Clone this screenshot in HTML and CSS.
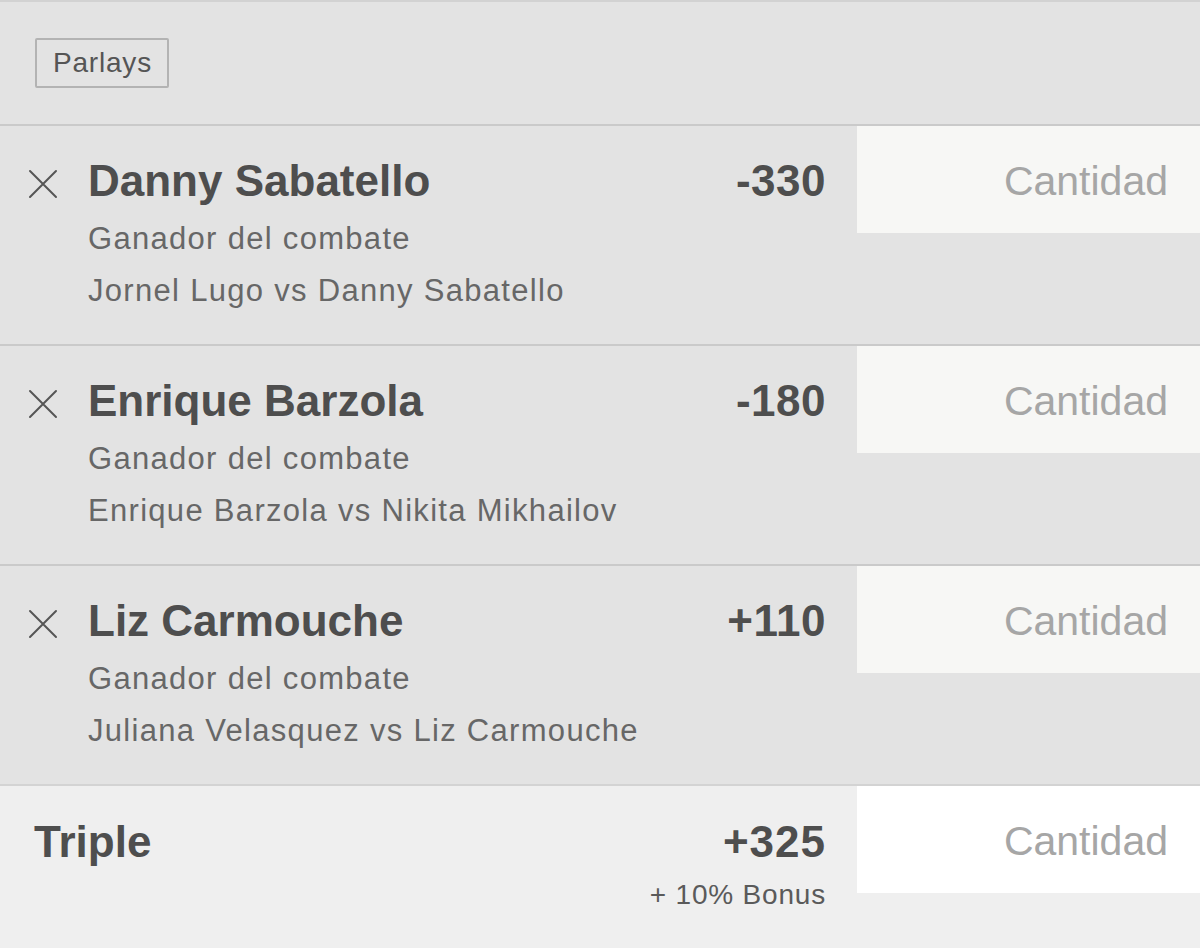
FILE: index.html
```html
<!DOCTYPE html>
<html lang="es">
<head>
  <meta charset="UTF-8">
  <meta name="viewport" content="width=device-width, initial-scale=1.0">
  <title>Parlays</title>
  <link rel="stylesheet" href="styles.css">
</head>
<body>
  <div class="slip">
    <div class="slip-header">
      <span class="tag">Parlays</span>
    </div>

    <div class="leg">
      <div class="remove">
        <svg viewBox="0 0 30 30" width="30" height="30"><path d="M2 2 L28 28 M28 2 L2 28" stroke="#555" stroke-width="2" fill="none" stroke-linecap="round"/></svg>
      </div>
      <div class="info">
        <div class="name">Danny Sabatello</div>
        <div class="market market-first">Ganador del combate</div>
        <div class="market">Jornel Lugo vs Danny Sabatello</div>
      </div>
      <div class="odds">-330</div>
      <div class="stake">Cantidad</div>
    </div>

    <div class="leg">
      <div class="remove">
        <svg viewBox="0 0 30 30" width="30" height="30"><path d="M2 2 L28 28 M28 2 L2 28" stroke="#555" stroke-width="2" fill="none" stroke-linecap="round"/></svg>
      </div>
      <div class="info">
        <div class="name">Enrique Barzola</div>
        <div class="market market-first">Ganador del combate</div>
        <div class="market">Enrique Barzola vs Nikita Mikhailov</div>
      </div>
      <div class="odds">-180</div>
      <div class="stake">Cantidad</div>
    </div>

    <div class="leg">
      <div class="remove">
        <svg viewBox="0 0 30 30" width="30" height="30"><path d="M2 2 L28 28 M28 2 L2 28" stroke="#555" stroke-width="2" fill="none" stroke-linecap="round"/></svg>
      </div>
      <div class="info">
        <div class="name">Liz Carmouche</div>
        <div class="market market-first">Ganador del combate</div>
        <div class="market">Juliana Velasquez vs Liz Carmouche</div>
      </div>
      <div class="odds">+110</div>
      <div class="stake">Cantidad</div>
    </div>

    <div class="total">
      <div class="total-label">Triple</div>
      <div class="total-odds">
        <div class="odds-value">+325</div>
        <div class="bonus">+ 10% Bonus</div>
      </div>
      <div class="stake stake-white">Cantidad</div>
    </div>
  </div>
</body>
</html>
```

FILE: styles.css
```css
body {
  margin: 0;
  font-family: "Liberation Sans", Arial, sans-serif;
  background-color: #e3e3e3;
  color: #555;
}
.slip {
  width: 1200px;
  height: 948px;
  overflow: hidden;
  border-top: 2px solid #d2d2d2;
  box-sizing: border-box;
}
.slip-header {
  height: 122px;
  padding: 36px 0 0 35px;
  box-sizing: border-box;
  background-color: #e3e3e3;
}
.tag {
  display: inline-block;
  height: 50px;
  padding: 0 15px 0 16px;
  border: 2px solid #b3b3b3;
  border-radius: 2px;
  box-sizing: border-box;
  font-size: 28px;
  line-height: 46px;
  letter-spacing: 0.8px;
  color: #555;
}
.leg {
  display: flex;
  height: 218px;
  border-top: 2px solid #cacaca;
  background-color: #e3e3e3;
}
.remove {
  width: 30px;
  height: 30px;
  margin: 43px 30px 0 28px;
}
.info {
  flex: 1;
  padding-top: 29px;
}
.name {
  font-size: 44px;
  font-weight: bold;
  line-height: 52px;
  color: #4e4e4e;
}
.market {
  font-size: 31px;
  line-height: 52px;
  letter-spacing: 1.3px;
  color: #676767;
}
.market-first {
  margin-top: 6px;
}
.odds {
  padding-top: 29px;
  margin-right: 31px;
  font-size: 44px;
  font-weight: bold;
  line-height: 52px;
  letter-spacing: 0.5px;
  color: #4e4e4e;
}
.stake {
  width: 343px;
  height: 107px;
  padding: 29px 32px 0 0;
  box-sizing: border-box;
  background-color: #f7f7f5;
  text-align: right;
  font-size: 41px;
  line-height: 52px;
  color: #a6a6a6;
}
.stake-white {
  background-color: #fff;
}
.total {
  display: flex;
  height: 162px;
  border-top: 2px solid #d3d3d3;
  background-color: #efefef;
}
.total-label {
  flex: 1;
  padding: 30px 0 0 34px;
  font-size: 44px;
  font-weight: bold;
  line-height: 52px;
  color: #4e4e4e;
}
.total-odds {
  padding-top: 30px;
  margin-right: 31px;
  text-align: right;
}
.odds-value {
  font-size: 44px;
  font-weight: bold;
  line-height: 52px;
  letter-spacing: 1px;
  color: #4e4e4e;
}
.bonus {
  margin-top: 10px;
  font-size: 28px;
  line-height: 34px;
  letter-spacing: 0.8px;
  color: #5a5a5a;
}
```
